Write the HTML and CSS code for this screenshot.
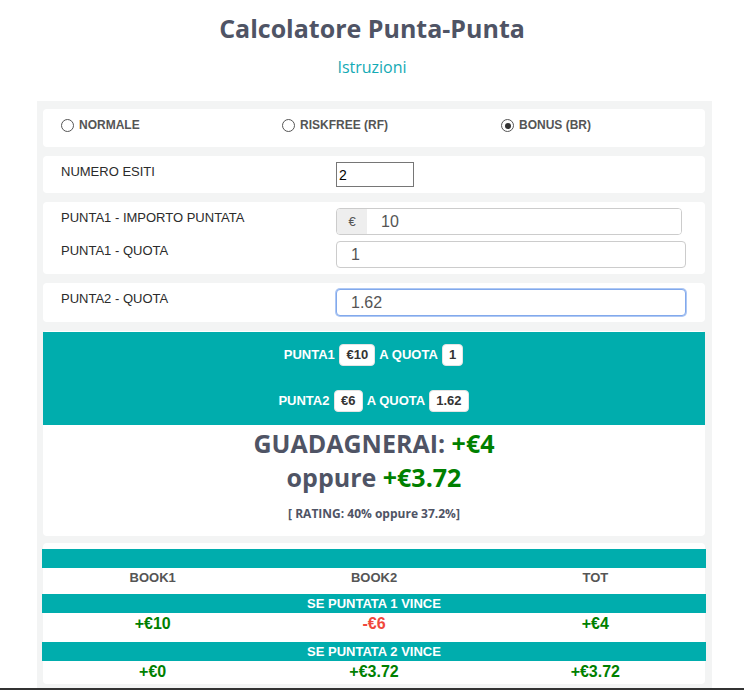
FILE: index.html
```html
<!DOCTYPE html>
<html lang="it">
<head>
    <meta charset="UTF-8">
    <meta name="viewport" content="width=device-width, initial-scale=1.0">
    <title>Calcolatore Punta-Punta</title>
    <link rel="stylesheet" href="styles.css">
</head>
<body>
    <header>
        <h1>Calcolatore Punta-Punta</h1>
        <a class="help" href="#">Istruzioni</a>
    </header>

    <div class="content">
        <section class="card modes">
            <label class="mode"><span class="radio"></span>NORMALE</label>
            <label class="mode"><span class="radio"></span>RISKFREE (RF)</label>
            <label class="mode"><span class="radio checked"></span>BONUS (BR)</label>
        </section>

        <section class="card row">
            <span class="label">NUMERO ESITI</span>
            <input class="plain" type="text" value="2">
        </section>

        <section class="card">
            <div class="row">
                <span class="label">PUNTA1 - IMPORTO PUNTATA</span>
                <div class="group">
                    <span class="addon">&euro;</span>
                    <input class="field" type="text" value="10">
                </div>
            </div>
            <div class="row">
                <span class="label">PUNTA1 - QUOTA</span>
                <input class="field wide" type="text" value="1">
            </div>
        </section>

        <section class="card row">
            <span class="label">PUNTA2 - QUOTA</span>
            <input class="field wide focus" type="text" value="1.62">
        </section>

        <section class="card result">
            <div class="bets">
                <p>PUNTA1 <span class="badge">&euro;10</span> A QUOTA <span class="badge">1</span></p>
                <p>PUNTA2 <span class="badge">&euro;6</span> A QUOTA <span class="badge">1.62</span></p>
            </div>
            <h2>GUADAGNERAI: <span class="win">+&euro;4</span></h2>
            <h2>oppure <span class="win">+&euro;3.72</span></h2>
            <p class="rating">[ RATING: 40% oppure 37.2%]</p>
        </section>

        <section class="card table">
            <table>
                <tr class="bar"><td colspan="3"></td></tr>
                <tr class="head"><td>BOOK1</td><td>BOOK2</td><td>TOT</td></tr>
                <tr class="bar"><td colspan="3">SE PUNTATA 1 VINCE</td></tr>
                <tr class="vals"><td class="win">+&euro;10</td><td class="lose">-&euro;6</td><td class="win">+&euro;4</td></tr>
                <tr class="bar"><td colspan="3">SE PUNTATA 2 VINCE</td></tr>
                <tr class="vals last"><td class="win">+&euro;0</td><td class="win">+&euro;3.72</td><td class="win">+&euro;3.72</td></tr>
            </table>
        </section>
    </div>

    <footer></footer>
</body>
</html>
```

FILE: styles.css
```css
body {
    font-family: "Liberation Sans", Arial, sans-serif;
    margin: 0;
    padding: 0;
    background-color: white;
    color: #333;
}
header {
    text-align: center;
    padding-top: 10px;
    font-family: "Open Sans", sans-serif;
}
header h1 {
    margin: 0;
    font-size: 25px;
    line-height: 36px;
    color: #4f5465;
}
.help {
    display: inline-block;
    margin-top: 10px;
    font-size: 16px;
    line-height: 22px;
    color: #14aab5;
    text-decoration: none;
}
.content {
    margin: 23px 32px 0 37px;
    padding: 8px 7px 4px 6px;
    background-color: #f3f4f4;
    display: flex;
    flex-direction: column;
    gap: 9px;
}
.card {
    background-color: white;
    border-radius: 4px;
    padding: 6px 19px 6px 18px;
}
.modes {
    display: grid;
    grid-template-columns: 221px 219px 1fr;
    padding-top: 9px;
    padding-bottom: 14px;
}
.mode {
    display: flex;
    align-items: center;
    gap: 5px;
    font-size: 12px;
    font-weight: bold;
    color: #555;
    line-height: 15px;
}
.radio {
    width: 11px;
    height: 11px;
    border: 1px solid #555;
    border-radius: 50%;
    display: flex;
    align-items: center;
    justify-content: center;
}
.radio.checked::after {
    content: "";
    width: 6px;
    height: 6px;
    border-radius: 50%;
    background-color: #333;
}
.row {
    display: grid;
    grid-template-columns: 275px 1fr;
    align-items: start;
}
.card .row + .row {
    margin-top: 6px;
}
.label {
    font-size: 13px;
    line-height: 15px;
    padding-top: 2px;
    color: #2b2b2b;
}
.plain {
    width: 78px;
    height: 25px;
    box-sizing: border-box;
    border: 1px solid #767676;
    padding: 0 2px;
    font-family: "Liberation Sans", Arial, sans-serif;
    font-size: 14px;
    color: #000;
}
.group {
    display: flex;
    margin-right: 4px;
    border: 1px solid #ccc;
    border-radius: 4px;
    overflow: hidden;
}
.addon {
    width: 30px;
    background-color: #eee;
    color: #555;
    font-size: 13px;
    display: flex;
    align-items: center;
    justify-content: center;
}
.field {
    height: 27px;
    box-sizing: border-box;
    border: 1px solid #ccc;
    border-radius: 4px;
    padding: 0 14px;
    font-family: "Liberation Sans", Arial, sans-serif;
    font-size: 16px;
    color: #555;
    outline: none;
}
.group .field {
    flex: 1;
    height: 25px;
    border: none;
    border-radius: 0;
}
.wide {
    width: 100%;
}
.focus {
    border-color: #82a9ec;
    box-shadow: 0 0 0 1px #aec8f4;
}
.result {
    padding: 1px 0 0;
    text-align: center;
    font-family: "Open Sans", sans-serif;
    color: #4f5465;
}
.bets {
    background-color: #00adad;
    padding: 0 0 1px;
}
.bets p {
    margin: 0;
    padding: 12px 0;
    line-height: 22px;
    font-family: "Liberation Sans", Arial, sans-serif;
    font-size: 13px;
    font-weight: bold;
    color: white;
}
.badge {
    display: inline-block;
    background-color: white;
    color: #333;
    border-radius: 4px;
    padding: 0 6px;
    line-height: 20px;
    border: 1px solid #e4e4e4;
    margin: 0 1px;
}
.result h2 {
    margin: 0;
    font-size: 25px;
    line-height: 34px;
}
.result h2:first-of-type {
    margin-top: 1px;
}
.win {
    color: #008000;
}
.lose {
    color: #f0483c;
}
.rating {
    margin: 11px 0 0;
    padding-bottom: 13px;
    font-size: 12px;
    font-weight: bold;
    line-height: 18px;
}
.table {
    margin-top: -2px;
    padding: 6px 0 1px;
}
table {
    width: calc(100% + 2px);
    margin: 0 -1px;
    border-collapse: collapse;
    text-align: center;
    font-weight: bold;
}
td {
    padding: 0;
    width: 33.33%;
}
.bar td {
    background-color: #00adad;
    color: white;
    font-size: 13px;
    height: 19px;
}
.head td {
    font-size: 13px;
    color: #555;
    line-height: 20px;
    padding-bottom: 6px;
}
.vals td {
    font-size: 16px;
    line-height: 22px;
    padding-bottom: 7px;
}
.vals.last td {
    padding-bottom: 0;
}
footer {
    height: 3px;
    background-color: #333;
}
```
